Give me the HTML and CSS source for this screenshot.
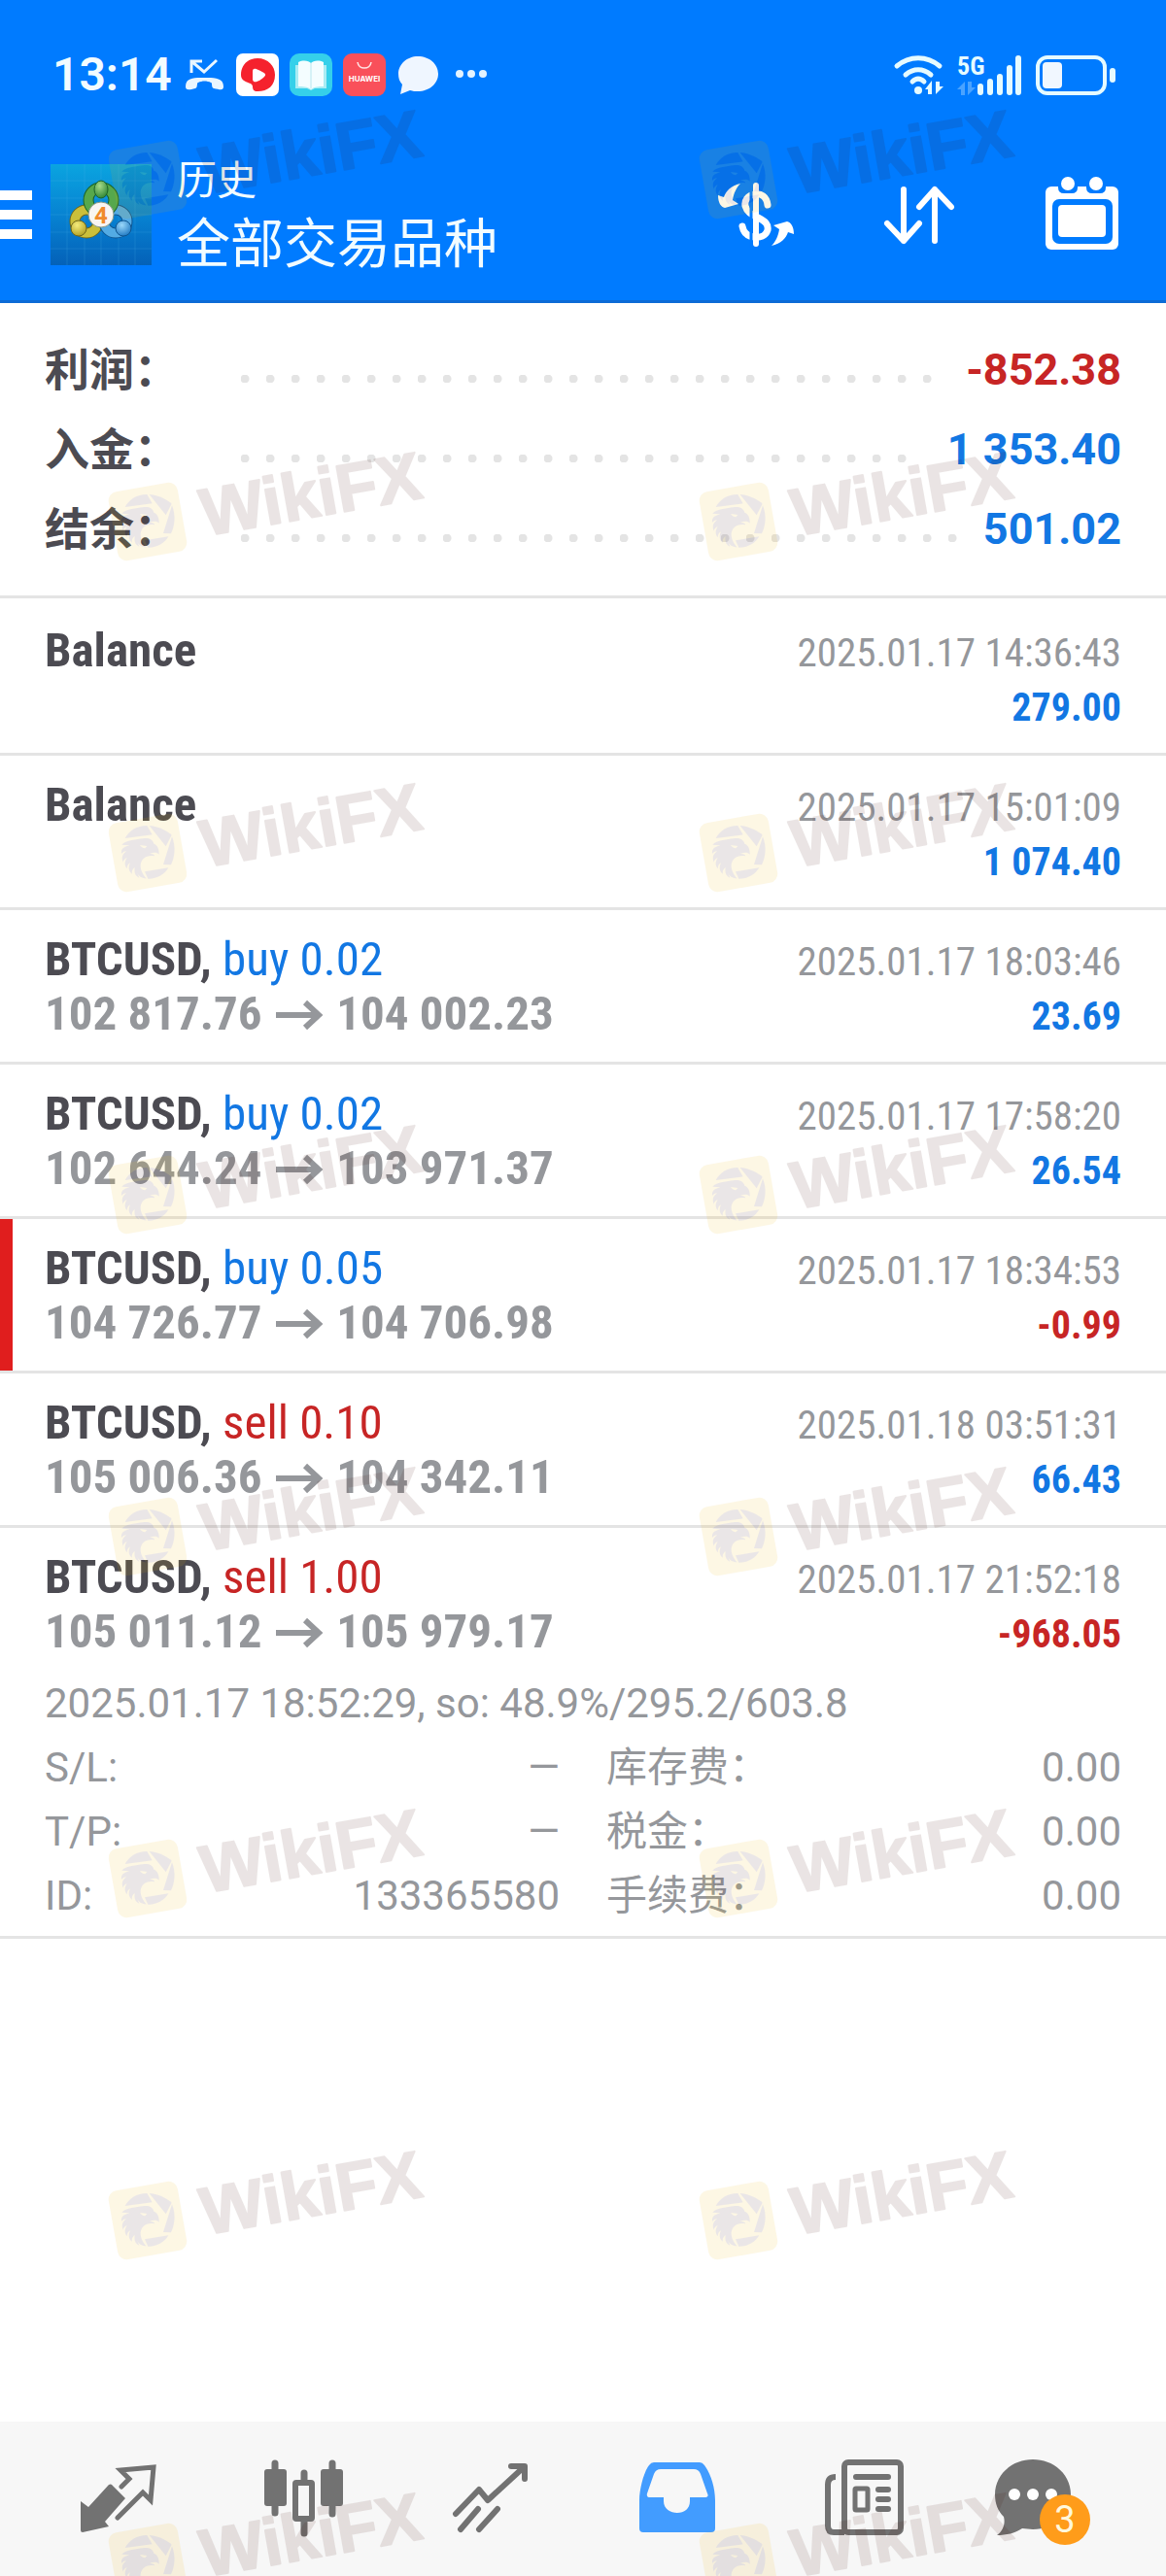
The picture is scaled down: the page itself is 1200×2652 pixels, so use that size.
FILE: index.html
```html
<!DOCTYPE html>
<html lang="zh-CN">
<head>
<meta charset="utf-8">
<meta name="viewport" content="width=device-width, initial-scale=1">
<title>历史</title>
<link rel="stylesheet" href="styles.css">
</head>
<body>
<svg class="defs" aria-hidden="true">
  <defs>
    <symbol id="mark" viewBox="0 0 350 130">
      <g transform="translate(4 32) scale(.3333)">
        <rect x="24" y="39" width="216" height="216" rx="28" fill="#f0b400" transform="rotate(-10 132 147)"/>
        <g fill="#3f1a20">
          <path d="M62 102C74 78 102 62 130 63L146 91Z"/>
          <path d="M137 63C170 66 196 82 206 92L188 127Z"/>
          <path d="M207 97C220 130 215 160 204 184L180 183Z"/>
          <path d="M123 205L196 193C184 214 160 228 133 227Z"/>
          <path d="M52 122C64 108 100 106 116 103C136 100 148 106 151 119C162 122 168 136 167 152C160 144 148 146 138 150C150 150 154 154 153 157C128 152 112 166 110 184C109 200 118 216 128 226C112 226 104 218 100 210L106 224C92 218 90 206 92 192C84 198 82 206 84 212C72 204 72 190 78 178C70 182 68 190 68 196C58 184 62 172 68 162C60 166 56 172 56 176C50 160 54 152 66 142C60 142 54 146 51 150C50 136 54 130 76 124Z"/>
        </g>
        <path d="M108 123L130 126L124 133C116 132 112 128 108 123Z" fill="#f0b400"/>
      </g>
      <text x="107" y="96" transform="rotate(-10 107 96)" class="mark-text">WikiFX</text>
    </symbol>
  </defs>
</svg>

<header class="header">
  <div class="status">
    <time class="clock">13:14</time>
    <div class="status-icons">
      <svg width="44" height="44" viewBox="0 0 44 44" aria-hidden="true">
        <path d="M9 20V8H20M9 8L22 19L35 7" fill="none" stroke="#eaf6ff" stroke-width="3"/>
        <path d="M3 34C3 24 14 25 22 25S42 24 42 34C42 39 38 37 32 36C29 35 31 30 29 30C25 28 20 28 16 30C14 30 16 35 13 36C6 38 3 38 3 34Z" fill="#eaf6ff"/>
      </svg>
      <svg width="44" height="44" viewBox="0 0 44 44" aria-hidden="true">
        <rect width="44" height="44" rx="7" fill="#fff"/>
        <path d="M22 5C33 5 40 13 40 22C40 33 33 39 22 39C18 39 17 37 17 34C17 29 5 31 5 22C5 12 12 5 22 5Z" fill="#f5222d"/>
        <path d="M17 19C17 15 19 15 23 17C29 20 32 21 29 24C25 28 18 32 17 27Z" fill="#fff"/>
      </svg>
      <svg width="44" height="44" viewBox="0 0 44 44" aria-hidden="true">
        <rect width="44" height="44" rx="10" fill="#35d0ea"/>
        <path d="M6 12H38V36H26L22 38L18 36H6Z" fill="#a9ecf4"/>
        <path d="M9 9C15 6 20 8 22 10V37C18 34 14 34 9 34ZM35 9C29 6 24 8 22 10V37C26 34 30 34 35 34Z" fill="#f4fdff"/>
        <path d="M22 10V36" stroke="#b6e6ee" stroke-width="1"/>
      </svg>
      <svg width="44" height="44" viewBox="0 0 44 44" aria-hidden="true">
        <rect width="44" height="44" rx="9" fill="#f9505a"/>
        <path d="M15 9C16 17 28 17 29 9" fill="none" stroke="#ffe3e3" stroke-width="1.6"/>
        <text x="22" y="29" class="store-text">HUAWEI</text>
      </svg>
      <svg width="44" height="44" viewBox="0 0 44 44" aria-hidden="true">
        <path d="M22 3C34 3 43 11 43 21S34 39 22 39C19 39 17 39 14 38L4 42L6 32C3 29 2 25 2 21C2 11 11 3 22 3Z" fill="#eff6ff"/>
      </svg>
      <svg width="44" height="44" viewBox="0 0 44 44" aria-hidden="true" fill="#e4f3ff">
        <circle cx="10" cy="21" r="4"/><circle cx="22" cy="21" r="4"/><circle cx="34" cy="21" r="4"/>
      </svg>
    </div>
    <div class="status-signal">
      <svg width="54" height="54" viewBox="0 0 54 54" aria-hidden="true">
        <g fill="none" stroke="#e6fbff" stroke-width="5" stroke-linecap="round">
          <path d="M4 18C17 7 35 7 48 18M13 27C21 20 31 20 39 27M20 34C24 30 28 30 32 34"/>
        </g>
        <circle cx="26" cy="43" r="4" fill="#e6fbff"/>
        <path d="M40 33V47H36V42H33ZM44 34V47L52 39H48V34Z" fill="#e6fbff"/>
      </svg>
      <svg width="76" height="54" viewBox="0 0 76 54" aria-hidden="true">
        <text x="4" y="27" class="net-text">5G</text>
        <g stroke="#e6fbff" stroke-width="6" stroke-linecap="round">
          <path d="M28 39V45M38 34V45M48 29V45M58 20V45M67 10V45"/>
        </g>
        <path d="M12 34V48H8V42H4ZM15 34V48L23 40H19V34Z" fill="#4aa3ff"/>
      </svg>
      <svg width="84" height="54" viewBox="0 0 84 54" aria-hidden="true">
        <rect x="3" y="9" width="69" height="37" rx="10" fill="none" stroke="#e6fbff" stroke-width="4"/>
        <rect x="8" y="14" width="20" height="27" rx="4" fill="#f1f7ff"/>
        <rect x="77" y="20" width="6" height="15" rx="3" fill="#e6fbff"/>
      </svg>
    </div>
  </div>
  <div class="appbar">
    <button class="menu" type="button" aria-label="菜单"><i></i><i></i><i></i></button>
    <svg class="logo" width="104" height="104" viewBox="0 0 104 104" aria-hidden="true">
      <defs>
        <linearGradient id="sky" x1="0" y1="0" x2="0" y2="1"><stop offset="0" stop-color="#0aa4e0"/><stop offset=".5" stop-color="#0783d2"/><stop offset="1" stop-color="#0461b8"/></linearGradient>
        <radialGradient id="green" cx=".4" cy=".3" r=".8"><stop offset="0" stop-color="#a8dc8a"/><stop offset="1" stop-color="#227d2c"/></radialGradient>
        <radialGradient id="gold" cx=".4" cy=".3" r=".8"><stop offset="0" stop-color="#f5ec7c"/><stop offset="1" stop-color="#a9981a"/></radialGradient>
        <radialGradient id="blue" cx=".4" cy=".3" r=".8"><stop offset="0" stop-color="#9bd8fa"/><stop offset="1" stop-color="#1470bd"/></radialGradient>
      </defs>
      <rect width="104" height="104" fill="url(#sky)"/>
      <path d="M17 0V104M35 0V104M52 0V104M70 0V104M87 0V104M0 17H104M0 35H104M0 52H104M0 70H104M0 87H104" stroke="#4fb8ea" stroke-opacity=".2"/>
      <g fill="none" stroke-width="9">
        <circle cx="37" cy="59" r="12" stroke="#6f671b" stroke-width="11"/>
        <circle cx="37" cy="59" r="12" stroke="#cbbf3a"/>
        <circle cx="67" cy="59" r="12" stroke="#0f5590" stroke-width="11"/>
        <circle cx="67" cy="59" r="12" stroke="#53abe4"/>
        <circle cx="52" cy="37" r="13" stroke="#1d6428" stroke-width="11"/>
        <circle cx="52" cy="37" r="13" stroke="#56a84c"/>
      </g>
      <g stroke-width="1">
        <ellipse cx="52" cy="26" rx="7" ry="9" fill="url(#green)" stroke="#1d6428"/>
        <circle cx="29" cy="66" r="8" fill="url(#gold)" stroke="#6f671b"/>
        <circle cx="75" cy="66" r="8" fill="url(#blue)" stroke="#0f5590"/>
      </g>
      <circle cx="52" cy="52" r="13" fill="#f8f5f2" stroke="#8a9a8a" stroke-width="1"/>
      <text x="52" y="61" class="logo-text">4</text>
    </svg>
    <div class="titles">
      <h1 class="title">历史</h1>
      <p class="subtitle">全部交易品种</p>
    </div>
    <div class="actions">
      <button class="action" type="button" aria-label="货币">
        <svg width="100" height="100" viewBox="0 0 100 100" aria-hidden="true">
          <path d="M62 40C61 31 55 28 49 29C41 30 38 36 39 41C41 48 46 50 52 53C60 57 63 60 62 66C60 72 54 74 48 73C41 72 37 68 36 62" fill="none" stroke="#fff" stroke-width="7" stroke-linecap="round"/>
          <path d="M45 20V84" stroke="#007bff" stroke-width="3"/>
          <path d="M50 20V80" stroke="#fff" stroke-width="6" stroke-linecap="round"/>
          <g fill="#fff">
            <path id="swap" d="M34 18C24 20 19 26 17 32L11 30C11 38 14 42 18 43L32 39L26 35C27 28 30 22 34 18Z"/>
            <use href="#swap" transform="rotate(180 50 50)"/>
          </g>
        </svg>
      </button>
      <button class="action" type="button" aria-label="排序">
        <svg width="100" height="100" viewBox="0 0 100 100" aria-hidden="true" fill="none" stroke="#fff" stroke-width="6" stroke-linecap="round" stroke-linejoin="round">
          <path d="M34 24V77M17 59L34 77L50 59M66 77V24M50 42L66 24L83 42"/>
        </svg>
      </button>
      <button class="action" type="button" aria-label="日期">
        <svg width="100" height="100" viewBox="0 0 100 100" aria-hidden="true">
          <rect x="12" y="21" width="75" height="65" rx="6" fill="#fff"/>
          <path d="M25 14H45V22Q45 28 39 28H31Q25 28 25 22ZM54 14H74V22Q74 28 68 28H60Q54 28 54 22Z" fill="#007bff"/>
          <rect x="19" y="34" width="62" height="46" rx="7" fill="#007bff"/>
          <rect x="25" y="40" width="49" height="33" rx="4" fill="#fff"/>
          <circle cx="35" cy="18" r="7" fill="#fff"/><circle cx="64" cy="18" r="7" fill="#fff"/>
        </svg>
      </button>
    </div>
  </div>
</header>

<main class="main">
  <dl class="summary">
    <div class="sum-row"><dt>利润：</dt><dd class="leader"></dd><dd class="amount loss">-852.38</dd></div>
    <div class="sum-row"><dt>入金：</dt><dd class="leader"></dd><dd class="amount gain">1 353.40</dd></div>
    <div class="sum-row"><dt>结余：</dt><dd class="leader"></dd><dd class="amount gain">501.02</dd></div>
  </dl>
  <ul class="deals">
    <li class="deal">
      <div class="line"><b class="symbol">Balance</b><time class="date">2025.01.17 14:36:43</time></div>
      <div class="line"><span class="price"></span><b class="profit gain">279.00</b></div>
    </li>
    <li class="deal">
      <div class="line"><b class="symbol">Balance</b><time class="date">2025.01.17 15:01:09</time></div>
      <div class="line"><span class="price"></span><b class="profit gain">1 074.40</b></div>
    </li>
    <li class="deal">
      <div class="line"><span class="symbol"><b>BTCUSD,</b> <span class="gain">buy 0.02</span></span><time class="date">2025.01.17 18:03:46</time></div>
      <div class="line"><span class="price">102 817.76 <svg class="arrow" viewBox="0 0 48 30" role="img" aria-label="至"><path d="M0 15H44M30 2L44 15L30 28"/></svg> 104 002.23</span><b class="profit gain">23.69</b></div>
    </li>
    <li class="deal">
      <div class="line"><span class="symbol"><b>BTCUSD,</b> <span class="gain">buy 0.02</span></span><time class="date">2025.01.17 17:58:20</time></div>
      <div class="line"><span class="price">102 644.24 <svg class="arrow" viewBox="0 0 48 30" role="img" aria-label="至"><path d="M0 15H44M30 2L44 15L30 28"/></svg> 103 971.37</span><b class="profit gain">26.54</b></div>
    </li>
    <li class="deal flagged">
      <div class="line"><span class="symbol"><b>BTCUSD,</b> <span class="gain">buy 0.05</span></span><time class="date">2025.01.17 18:34:53</time></div>
      <div class="line"><span class="price">104 726.77 <svg class="arrow" viewBox="0 0 48 30" role="img" aria-label="至"><path d="M0 15H44M30 2L44 15L30 28"/></svg> 104 706.98</span><b class="profit loss">-0.99</b></div>
    </li>
    <li class="deal">
      <div class="line"><span class="symbol"><b>BTCUSD,</b> <span class="loss">sell 0.10</span></span><time class="date">2025.01.18 03:51:31</time></div>
      <div class="line"><span class="price">105 006.36 <svg class="arrow" viewBox="0 0 48 30" role="img" aria-label="至"><path d="M0 15H44M30 2L44 15L30 28"/></svg> 104 342.11</span><b class="profit gain">66.43</b></div>
    </li>
    <li class="deal open">
      <div class="line"><span class="symbol"><b>BTCUSD,</b> <span class="loss">sell 1.00</span></span><time class="date">2025.01.17 21:52:18</time></div>
      <div class="line"><span class="price">105 011.12 <svg class="arrow" viewBox="0 0 48 30" role="img" aria-label="至"><path d="M0 15H44M30 2L44 15L30 28"/></svg> 105 979.17</span><b class="profit loss">-968.05</b></div>
      <div class="details">
        <p class="comment">2025.01.17 18:52:29, so: 48.9%/295.2/603.8</p>
        <dl class="facts">
          <div class="fact"><dt>S/L:</dt><dd>—</dd></div>
          <div class="fact"><dt>库存费：</dt><dd>0.00</dd></div>
          <div class="fact"><dt>T/P:</dt><dd>—</dd></div>
          <div class="fact"><dt>税金：</dt><dd>0.00</dd></div>
          <div class="fact"><dt>ID:</dt><dd>133365580</dd></div>
          <div class="fact"><dt>手续费：</dt><dd>0.00</dd></div>
        </dl>
      </div>
    </li>
  </ul>
</main>

<nav class="tabs" aria-label="主导航">
  <button class="tab" type="button" aria-label="行情">
    <svg width="84" height="84" viewBox="0 0 84 84" aria-hidden="true">
      <path d="M47 30L55 22L46 13L80 10L77 44L69 36L43 62" fill="none" stroke="currentColor" stroke-width="5" stroke-linecap="round"/>
      <path d="M37 28L51 42L30 66L34 71L7 77Q5 77 5 75V45L13 51L34 28Q36 27 37 28Z" fill="currentColor"/>
    </svg>
  </button>
  <button class="tab" type="button" aria-label="图表">
    <svg width="84" height="84" viewBox="0 0 84 84" aria-hidden="true">
      <g fill="currentColor"><rect x="2" y="12" width="23" height="38" rx="3"/><rect x="60" y="12" width="23" height="38" rx="3"/></g>
      <rect x="34" y="26" width="17" height="37" rx="1" fill="none" stroke="currentColor" stroke-width="6"/>
      <path d="M13 6V57M72 6V58M43 16V24M43 66V78" stroke="currentColor" stroke-width="7" stroke-linecap="round"/>
    </svg>
  </button>
  <button class="tab" type="button" aria-label="交易">
    <svg width="84" height="84" viewBox="0 0 84 84" aria-hidden="true" fill="none" stroke="currentColor" stroke-width="6" stroke-linecap="round" stroke-linejoin="round">
      <path d="M7 58L31 33L40 44L77 10M64 9H78V22M30 53L12 74M50 53L31 74"/>
    </svg>
  </button>
  <button class="tab current" type="button" aria-label="历史" aria-current="page">
    <svg width="84" height="84" viewBox="0 0 84 84" aria-hidden="true">
      <path fill-rule="evenodd" fill="currentColor" d="M4 44C4 32 9 14 14 8Q16 5 19 5H66Q69 5 71 8C77 16 82 30 82 44V73Q82 77 78 77H8Q4 77 4 73ZM26 12Q21 12 19 17L12 37Q11 41 15 41H29V45C29 53 36 57 43 57S56 53 56 45V41H71Q76 41 74 37L67 17Q65 12 60 12Z"/>
    </svg>
  </button>
  <button class="tab" type="button" aria-label="新闻">
    <svg width="84" height="84" viewBox="0 0 84 84" aria-hidden="true" fill="none" stroke="currentColor" stroke-width="6">
      <rect x="23" y="5" width="58" height="72" rx="4"/>
      <path d="M14 20Q6 20 6 28V70Q6 77 12 77H23"/>
      <rect x="34" y="32" width="13" height="22" rx="1" stroke-width="5"/>
      <path d="M35 20H68M58 33H68M58 43H68M58 53H68" stroke-linecap="round"/>
    </svg>
  </button>
  <button class="tab" type="button" aria-label="消息，3 条未读">
    <svg width="112" height="84" viewBox="0 0 112 84" aria-hidden="true">
      <path d="M39 2C61 2 78 18 78 38S61 74 39 74L28 73C20 78 12 80 2 80C8 76 11 68 9 61C3 55 0 48 0 38C0 18 17 2 39 2Z" fill="currentColor"/>
      <g fill="#fff"><circle cx="20" cy="38" r="6"/><circle cx="39" cy="38" r="6"/><circle cx="58" cy="38" r="6"/></g>
      <circle cx="72" cy="64" r="26" fill="#ff9c1a"/>
      <text x="72" y="77" class="badge-text">3</text>
    </svg>
  </button>
</nav>

<div class="marks" aria-hidden="true">
  <div class="mark-grid mark-grid-top">
    <svg class="mark"><use href="#mark"/></svg><svg class="mark"><use href="#mark"/></svg>
    <svg class="mark"><use href="#mark"/></svg><svg class="mark"><use href="#mark"/></svg>
  </div>
  <div class="mark-grid">
    <svg class="mark"><use href="#mark"/></svg><svg class="mark"><use href="#mark"/></svg>
    <svg class="mark"><use href="#mark"/></svg><svg class="mark"><use href="#mark"/></svg>
    <svg class="mark"><use href="#mark"/></svg><svg class="mark"><use href="#mark"/></svg>
    <svg class="mark"><use href="#mark"/></svg><svg class="mark"><use href="#mark"/></svg>
    <svg class="mark"><use href="#mark"/></svg><svg class="mark"><use href="#mark"/></svg>
    <svg class="mark"><use href="#mark"/></svg><svg class="mark"><use href="#mark"/></svg>
  </div>
</div>
</body>
</html>
```
FILE: styles.css
```css
:root {
  --bar: #007bff;
  --gain: #1277e3;
  --loss: #c72525;
  --dark: #4c4b52;
  --gray: #95979b;
  --rule: #e4e4e4;
  --text: Roboto, "Noto Sans CJK SC", sans-serif;
  --narrow: "Roboto Condensed", Roboto, "Noto Sans CJK SC", sans-serif;
}

* { box-sizing: border-box; }

body {
  position: relative;
  display: flex;
  flex-direction: column;
  min-height: 100vh;
  margin: 0;
  background: #fff;
  color: var(--dark);
  font-family: var(--text);
}

h1, p, dl, dd, ul { margin: 0; padding: 0; }
ul { list-style: none; }
svg { display: block; flex: none; overflow: visible; }
button { padding: 0; border: 0; background: none; color: inherit; cursor: pointer; }

.defs { position: absolute; width: 0; height: 0; }

/* Header */
.header {
  background: var(--bar);
  border-bottom: 3px solid #0c6bd6;
  color: #f2fcff;
}

.status {
  display: flex;
  align-items: center;
  padding: 47px 51px 26px 54px;
}

.clock {
  width: 134px;
  font-size: 48px;
  font-weight: 600;
  line-height: 60px;
}

.status-icons { display: flex; gap: 11px; }
.status-signal { display: flex; gap: 8px; margin-left: auto; }

.store-text { fill: #fff; font: 700 8px Inter, sans-serif; text-anchor: middle; }
.net-text { fill: #e6fbff; font: 700 26px var(--narrow); }

.appbar {
  display: flex;
  align-items: center;
  height: 176px;
  padding-right: 36px;
}

.menu {
  display: flex;
  flex-direction: column;
  gap: 10px;
  width: 52px;
}
.menu i { width: 33px; height: 10px; background: #fff; }

.logo-text { fill: #f08a2c; font: 700 24px Roboto, sans-serif; text-anchor: middle; }

.titles { padding-top: 4px; margin-left: 26px; }
.title { font-size: 41px; font-weight: 400; line-height: 56px; }
.subtitle { font-size: 55px; line-height: 74px; }

.actions { display: flex; gap: 68px; margin-left: auto; }

/* Account summary */
.main { flex: 1; }

.summary {
  padding: 28px 46px 27px;
  border-bottom: 3px solid var(--rule);
  font-size: 46px;
  font-weight: 700;
  line-height: 82px;
}

.sum-row { display: flex; }
.sum-row dt { width: 202px; }
.amount { font-size: 45px; }

.leader {
  flex: 1;
  align-self: flex-end;
  height: 8px;
  margin: 0 26px 28px 0;
  background: radial-gradient(circle at 4px 4px, var(--rule) 4px, transparent 5px) repeat-x 0 0 / 26px 8px;
}

.gain { color: var(--gain); }
.loss { color: var(--loss); }

/* Deals */
.deals { padding-top: 3px; font-family: var(--narrow); }

.deal {
  padding: 22px 46px;
  border-bottom: 3px solid var(--rule);
}
.deal.flagged { box-shadow: inset 13px 0 #e01e1e; }
.deal.open { padding-bottom: 8px; }

.line {
  display: flex;
  align-items: baseline;
  justify-content: space-between;
  height: 56px;
  font-size: 49px;
  line-height: 58px;
}

.price { color: var(--gray); font-weight: 700; }
.price:empty::before { content: "\200b"; }
.date { color: var(--gray); font-size: 41px; }
.profit { font-size: 40px; }

.arrow {
  display: inline-block;
  width: 48px;
  height: 30px;
  margin: 0 3px;
  fill: none;
  stroke: var(--gray);
  stroke-width: 6;
}

.details {
  margin-top: 14px;
  color: var(--gray);
  font-family: var(--text);
  font-size: 42px;
  line-height: 66px;
}

.facts { display: grid; grid-template-columns: 1fr 1fr; column-gap: 48px; }
.fact { display: flex; justify-content: space-between; }

/* Bottom tabs */
.tabs {
  display: flex;
  padding: 37px 24px 38px;
  background: #f7f7f7;
  color: #727272;
}
.tab { display: flex; flex: 1; justify-content: center; }
.tab.current { color: #429cff; }
.badge-text { fill: #fff8dc; font: 400 38px var(--text); text-anchor: middle; }

/* Watermark layer */
.marks {
  position: absolute;
  inset: 0;
  overflow: hidden;
  padding: 104px 0 0 104px;
  opacity: .1;
  pointer-events: none;
}
.mark-grid {
  display: grid;
  grid-template-columns: 608px 1fr;
  grid-auto-rows: 352px;
}
.mark-grid-top { grid-template-rows: 352px 341px; }
.mark { width: 350px; height: 130px; }
.mark-text {
  fill: #3c0800;
  stroke: #3c0800;
  stroke-width: 2;
  stroke-linejoin: round;
  font: 700 69px "Liberation Sans", sans-serif;
}
```
